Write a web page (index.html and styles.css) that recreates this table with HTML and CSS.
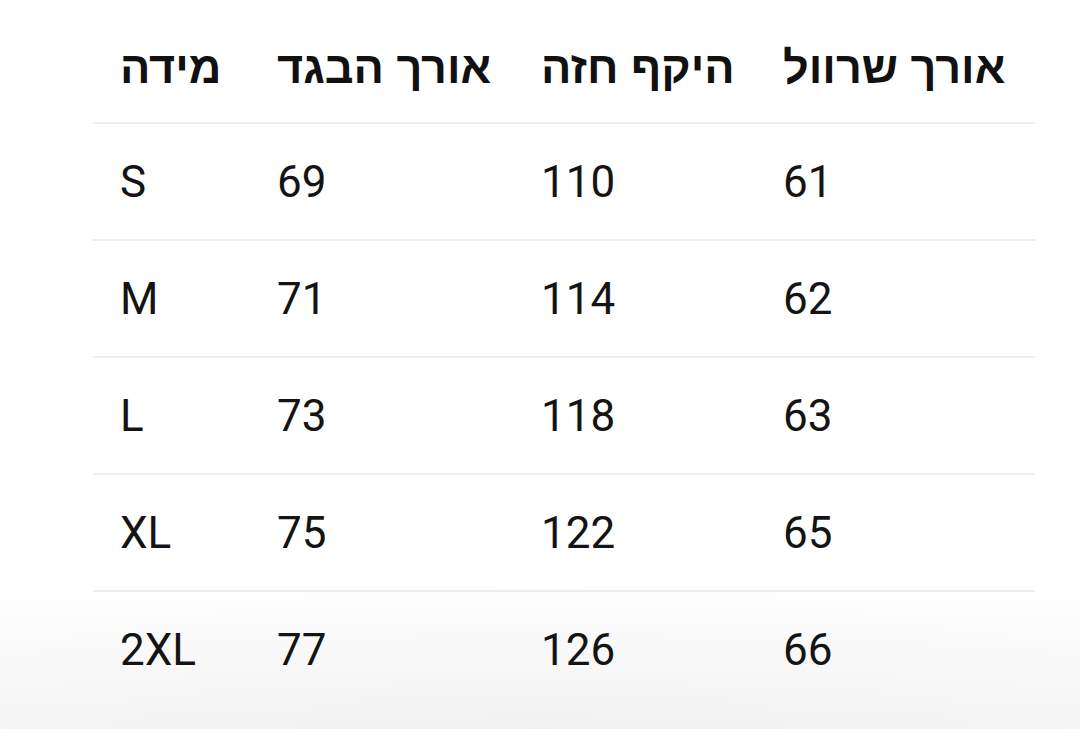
FILE: index.html
```html
<!DOCTYPE html>
<html lang="he">
<head>
<meta charset="utf-8">
<title>טבלת מידות</title>
<link rel="stylesheet" href="styles.css">
</head>
<body>
<div class="page">
  <div class="size-table">
    <div class="row head">
      <div class="cell">מידה</div>
      <div class="cell">אורך הבגד</div>
      <div class="cell">היקף חזה</div>
      <div class="cell">אורך שרוול</div>
    </div>
    <div class="row">
      <div class="cell">S</div><div class="cell">69</div><div class="cell">110</div><div class="cell">61</div>
    </div>
    <div class="row">
      <div class="cell">M</div><div class="cell">71</div><div class="cell">114</div><div class="cell">62</div>
    </div>
    <div class="row">
      <div class="cell">L</div><div class="cell">73</div><div class="cell">118</div><div class="cell">63</div>
    </div>
    <div class="row">
      <div class="cell">XL</div><div class="cell">75</div><div class="cell">122</div><div class="cell">65</div>
    </div>
    <div class="row last">
      <div class="cell">2XL</div><div class="cell">77</div><div class="cell">126</div><div class="cell">66</div>
    </div>
  </div>
</div>
</body>
</html>
```

FILE: styles.css
```css
html, body {
  margin: 0;
  padding: 0;
}
body {
  width: 1080px;
  height: 729px;
  overflow: hidden;
  background: #ffffff;
}
.page {
  width: 1080px;
  height: 729px;
  background:
    radial-gradient(ellipse 700px 160px at 50% 100%, rgba(0,0,0,0.015), rgba(0,0,0,0) 100%),
    linear-gradient(to bottom, #ffffff 0px, #ffffff 580px, #f5f5f5 729px);
  padding-left: 93px;
  box-sizing: border-box;
}
.size-table {
  width: 942px;
  display: flex;
  flex-direction: column;
}
.row {
  display: grid;
  grid-template-columns: 157px 264px 242px 279px;
  height: 115px;
  align-items: center;
  border-bottom: 2px solid #ededed;
  font-family: Roboto, "Liberation Sans", sans-serif;
  font-size: 44px;
  color: #141414;
}
.row.head {
  height: 110px;
  padding-top: 12px;
  font-family: "Liberation Sans", Arial, sans-serif;
  font-weight: bold;
  font-size: 45px;
  color: #111111;
}
.row.last {
  border-bottom: none;
}
.cell {
  padding-left: 27px;
  text-align: left;
  white-space: nowrap;
  line-height: 1;
}
```
